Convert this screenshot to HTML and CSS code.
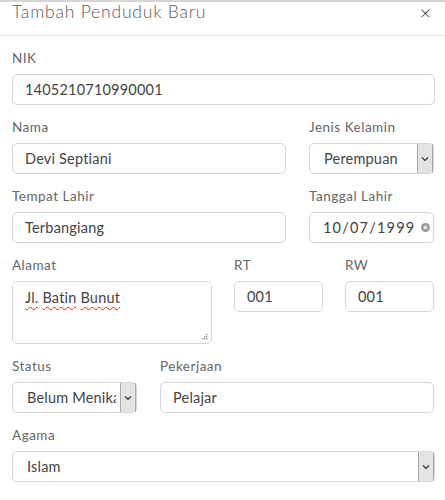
FILE: index.html
```html
<!DOCTYPE html>
<html lang="id">
<head>
<meta charset="utf-8">
<title>Tambah Penduduk Baru</title>
<link rel="stylesheet" href="styles.css">
</head>
<body>
<div class="modal">
  <div class="modal-header">
    <h5 class="modal-title">Tambah Penduduk Baru</h5>
    <span class="close">&times;</span>
  </div>
  <div class="modal-body">
    <div class="group">
      <label class="lbl">NIK</label>
      <input class="ctl" type="text" value="1405210710990001">
    </div>
    <div class="row row-a">
      <div class="group">
        <label class="lbl">Nama</label>
        <input class="ctl" type="text" value="Devi Septiani">
      </div>
      <div class="group">
        <label class="lbl">Jenis Kelamin</label>
        <div class="sel">
          <select class="ctl sel-ctl"><option>Perempuan</option></select>
          <span class="sel-btn"><svg width="8" height="6" viewBox="0 0 8 6"><path d="M1 1.5 L4 4.5 L7 1.5" fill="none" stroke="#333" stroke-width="1.2"/></svg></span>
        </div>
      </div>
    </div>
    <div class="row row-a">
      <div class="group">
        <label class="lbl">Tempat Lahir</label>
        <input class="ctl" type="text" value="Terbangiang">
      </div>
      <div class="group">
        <label class="lbl">Tanggal Lahir</label>
        <div class="date">
          <input class="ctl date-ctl" type="text" value="10/07/1999">
          <span class="clear"><svg width="9" height="9" viewBox="0 0 9 9"><circle cx="4.5" cy="4.5" r="4.5" fill="#9a9a9a"/><path d="M2.8 2.8 L6.2 6.2 M6.2 2.8 L2.8 6.2" stroke="#fff" stroke-width="1.1"/></svg></span>
        </div>
      </div>
    </div>
    <div class="row row-b">
      <div class="group">
        <label class="lbl">Alamat</label>
        <div class="ctl area"><span class="sq">Jl.</span> <span class="sq">Batin</span> <span class="sq">Bunut</span><svg class="grip" width="6" height="6" viewBox="0 0 6 6"><rect x="4" y="0" width="1.3" height="1.3" fill="#888"/><rect x="2" y="2" width="1.3" height="1.3" fill="#888"/><rect x="4" y="2" width="1.3" height="1.3" fill="#888"/><rect x="0" y="4" width="1.3" height="1.3" fill="#888"/><rect x="2" y="4" width="1.3" height="1.3" fill="#888"/><rect x="4" y="4" width="1.3" height="1.3" fill="#888"/></svg></div>
      </div>
      <div class="group">
        <label class="lbl">RT</label>
        <input class="ctl" type="text" value="001">
      </div>
      <div class="group">
        <label class="lbl">RW</label>
        <input class="ctl" type="text" value="001">
      </div>
    </div>
    <div class="row row-c">
      <div class="group">
        <label class="lbl">Status</label>
        <div class="sel">
          <select class="ctl sel-ctl"><option>Belum Menikah</option></select>
          <span class="sel-btn"><svg width="8" height="6" viewBox="0 0 8 6"><path d="M1 1.5 L4 4.5 L7 1.5" fill="none" stroke="#333" stroke-width="1.2"/></svg></span>
        </div>
      </div>
      <div class="group">
        <label class="lbl">Pekerjaan</label>
        <input class="ctl" type="text" value="Pelajar">
      </div>
    </div>
    <div class="group">
      <label class="lbl">Agama</label>
      <div class="sel">
        <select class="ctl sel-ctl"><option>Islam</option></select>
        <span class="sel-btn"><svg width="8" height="6" viewBox="0 0 8 6"><path d="M1 1.5 L4 4.5 L7 1.5" fill="none" stroke="#333" stroke-width="1.2"/></svg></span>
      </div>
    </div>
  </div>
</div>
</body>
</html>
```
FILE: styles.css
```css
* { box-sizing: border-box; }
html, body { margin: 0; padding: 0; background: #fff; }
body {
  font-family: Lato, "Open Sans", sans-serif;
  color: #555;
  width: 445px;
  height: 500px;
  overflow: hidden;
}
.modal { border-top: 2px solid #d6d6d6; }
.modal-header {
  height: 34px;
  display: flex;
  align-items: flex-start;
  justify-content: space-between;
  padding: 0 14px 0 12px;
  border-bottom: 1px solid #e4e6ea;
}
.modal-title {
  margin: 0;
  font-size: 17.5px;
  font-weight: 300;
  letter-spacing: 0.8px;
  line-height: 20px;
  color: #5a5a5a;
}
.close {
  display: block;
  font-size: 20px;
  line-height: 22px;
  margin-top: -1px;
  color: #333;
  font-weight: 300;
}
.modal-body { padding: 12px 10px 0 12px; }
.group { margin-bottom: 12px; }
.row { display: grid; }
.row-a { grid-template-columns: 274px 125px; column-gap: 23px; }
.row-b { grid-template-columns: 200px 89px 89px; column-gap: 22px; }
.row-c { grid-template-columns: 125px 274px; column-gap: 23px; }
.lbl {
  display: block;
  font-size: 13.5px;
  letter-spacing: 0.5px;
  line-height: 20px;
  margin-bottom: 6px;
  color: #666;
}
.ctl {
  display: block;
  width: 100%;
  height: 31px;
  margin: 0;
  padding: 0 12px;
  border: 1px solid #d3d5e3;
  border-radius: 5px;
  background: #fff;
  font-family: inherit;
  font-size: 14.5px;
  letter-spacing: 0.2px;
  color: #444;
  outline: none;
}
.sel { position: relative; }
.sel-ctl {
  appearance: none;
  -webkit-appearance: none;
  padding-left: 14px;
  padding-right: 20px;
}
.sel-btn {
  position: absolute;
  top: 1px;
  bottom: 1px;
  right: 1px;
  width: 16px;
  background: #e3e3e3;
  border-left: 1px solid #a9a9a9;
  border-right: 1px solid #a9a9a9;
  display: flex;
  align-items: center;
  justify-content: center;
}
.date { position: relative; }
.date-ctl { padding-left: 13px; padding-right: 12px; letter-spacing: 1.2px; }
.clear {
  position: absolute;
  right: 4px;
  top: 11px;
  display: flex;
  background: #fff;
}
.area {
  position: relative;
  height: 63px;
  padding: 6px 12px;
  line-height: 20px;
}
.sq {
  text-decoration: underline wavy #e0301e;
  text-decoration-thickness: 1px;
  text-underline-offset: 3px;
}
.grip { position: absolute; right: 3px; bottom: 3px; }
```
